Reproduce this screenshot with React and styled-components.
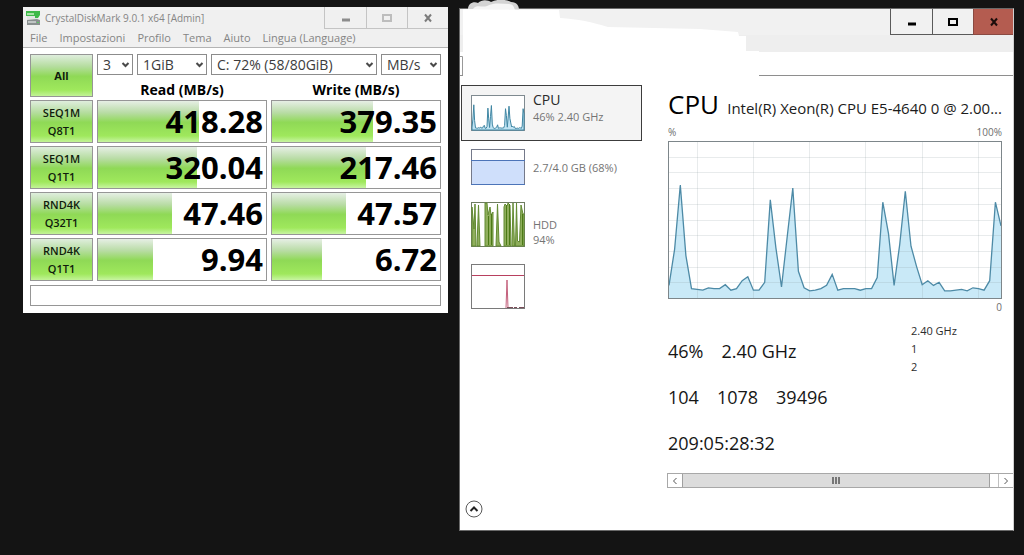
import React from 'react';
import styled, { createGlobalStyle } from 'styled-components';

const GlobalStyle = createGlobalStyle`
  *, *::before, *::after {
    box-sizing: border-box;
  }

  body {
    margin: 0;
    background-color: #141414;
    font-family: 'Open Sans', 'Noto Sans', sans-serif;
  }

  button, select {
    font-family: inherit;
    color: inherit;
  }
`;

const Desktop = styled.main`
  display: grid;
  grid-template-columns: minmax(0, 425fr) minmax(0, 555fr);
  align-items: start;
  gap: 11px;
  min-height: 100vh;
  padding: 7px 10px 24px 23px;
`;

/* --- shared window parts --- */

const WindowButtons = styled.div`
  display: flex;
  flex: none;
  margin-left: auto;
`;

const WindowButton = styled.button`
  display: flex;
  align-items: center;
  justify-content: center;
  width: ${(props) => props.$width}px;
  height: ${(props) => props.$height}px;
  padding: 0;
  border: 0 solid ${(props) => props.$line};
  border-width: 0 0 1px 1px;
  background-color: ${(props) => props.$bg || 'transparent'};
  color: ${(props) => props.$color};
`;

const Glyph = ({ name }) => (
    <svg width="12" height="12" viewBox="0 0 12 12" fill="none" stroke="currentColor" strokeWidth="2">
        {name === 'min' && <path d="M2 8h8" strokeWidth="3" />}
        {name === 'max' && <path d="M2 3h8v6H2z" />}
        {name === 'close' && <path d="M3 2.5l6 7M9 2.5l-6 7" />}
    </svg>
);

/* --- disk benchmark --- */

const BenchWindow = styled.section`
  background-color: #ffffff;
`;

const BenchTop = styled.header`
  background-color: #f0f0f0;
  border-bottom: 1px solid #b4b4b4;
  color: #858585;
`;

const BenchTitleBar = styled.div`
  display: flex;
  padding-left: 3px;
`;

const BenchTitle = styled.h1`
  display: flex;
  align-items: center;
  gap: 4px;
  margin: 0;
  font-size: 10px;
  font-weight: 400;
  white-space: nowrap;
`;

const MenuBar = styled.nav`
  display: flex;
  gap: 12px;
  padding: 0 7px;
`;

const MenuButton = styled.button`
  height: 18px;
  padding: 0;
  border: 0;
  background: none;
  font-size: 11px;
  line-height: 18px;
`;

const BenchBody = styled.div`
  padding: 3px 3px 7px;
`;

const BenchTable = styled.table`
  width: 100%;
  table-layout: fixed;
  border-collapse: separate;
  border-spacing: 4px 3px;

  th, td {
    padding: 0;
    vertical-align: top;
  }
`;

const ButtonColumn = styled.col`
  width: 63px;
`;

const TestButton = styled.button`
  display: block;
  width: 100%;
  height: 43px;
  padding: 0;
  border: 1px solid #969696;
  background: linear-gradient(#dfeedd 0%, #b5dd9f 28%, #8fd956 52%, #9fe85c 85%, #c2f397 100%);
  color: #101c0c;
  font-size: 11px;
  font-weight: 700;
  line-height: 18px;
`;

const TestLine = styled.span`
  display: block;
  font-weight: 600;
`;

const SelectRow = styled.div`
  display: flex;
  gap: 4px;
`;

const SelectBox = styled.div`
  display: grid;
  flex: ${(props) => props.$grow} 1 0;
  align-items: center;
  min-width: 0;

  > * {
    grid-area: 1 / 1;
  }

  svg {
    justify-self: end;
    margin-right: 3px;
    pointer-events: none;
  }
`;

const Select = styled.select`
  width: 100%;
  height: 21px;
  padding: 0 5px;
  border: 1px solid #8c8c8c;
  border-radius: 0;
  appearance: none;
  background-color: #ffffff;
  color: #3c3c3c;
  font-size: 14px;
  line-height: 19px;
`;

const ColumnHead = styled.th`
  && {
    padding-top: 4px;
  }
  font-size: 14px;
  font-weight: 700;
  line-height: 15px;
`;

const Meter = styled.div`
  display: grid;
  height: 43px;
  border: 1px solid #969696;

  > * {
    grid-area: 1 / 1;
  }
`;

const MeterFill = styled.div`
  background: linear-gradient(#e6efe5 0%, #b9dca6 28%, #8fd956 52%, #9fe85c 85%, #c8f5a2 100%);
`;

const MeterValue = styled.span`
  padding-right: 3px;
  color: #000000;
  font-size: 31px;
  font-weight: 700;
  line-height: 41px;
  text-align: right;
`;

const StatusField = styled.div`
  height: 21px;
  margin: 1px 4px 0;
  border: 1px solid #969696;
`;

const selects = [
    { label: 'Test count', value: '3', grow: 36 },
    { label: 'Test size', value: '1GiB', grow: 70 },
    { label: 'Drive', value: 'C: 72% (58/80GiB)', grow: 166 },
    { label: 'Unit', value: 'MB/s', grow: 60 },
];

const results = [
    { test: ['SEQ1M', 'Q8T1'], read: '418.28', readFill: 60, write: '379.35', writeFill: 60 },
    { test: ['SEQ1M', 'Q1T1'], read: '320.04', readFill: 59, write: '217.46', writeFill: 56 },
    { test: ['RND4K', 'Q32T1'], read: '47.46', readFill: 44, write: '47.57', writeFill: 44 },
    { test: ['RND4K', 'Q1T1'], read: '9.94', readFill: 33, write: '6.72', writeFill: 30 },
];

const DiskIcon = () => (
    <svg width="15" height="16" viewBox="0 0 15 16">
        <path d="M0 1h14v4l-2 3H9V6H0z" fill="#3fb94a" />
        <path d="M1 3h7v2H1z" fill="#a5e3a4" />
        <path d="M1 6h8v2h3l-2 3H1z" fill="#e2e5e4" />
        <path d="M1 10l10-1 3 1v5H1z" fill="#8a9090" />
        <path d="M2 11h8v2H2z" fill="#c0c5c5" />
        <path d="M11 12h2v1h-2z" fill="#58cb63" />
    </svg>
);

const ResultMeter = ({ value, fill }) => (
    <Meter>
        <MeterFill style={{ width: `${fill}%` }} />
        <MeterValue>{value}</MeterValue>
    </Meter>
);

const DiskBenchmark = () => (
    <BenchWindow>
        <BenchTop>
            <BenchTitleBar>
                <BenchTitle><DiskIcon />CrystalDiskMark 9.0.1 x64 [Admin]</BenchTitle>
                <WindowButtons>
                    <WindowButton $width={42} $height={22} $line="#c4c4c4" $color="#8c8c8c" aria-label="Minimize"><Glyph name="min" /></WindowButton>
                    <WindowButton $width={41} $height={22} $line="#c4c4c4" $color="#bdbdbd" aria-label="Maximize"><Glyph name="max" /></WindowButton>
                    <WindowButton $width={41} $height={22} $line="#c4c4c4" $color="#7c7c7c" aria-label="Close"><Glyph name="close" /></WindowButton>
                </WindowButtons>
            </BenchTitleBar>
            <MenuBar>
                {['File', 'Impostazioni', 'Profilo', 'Tema', 'Aiuto', 'Lingua (Language)'].map((item) => (
                    <MenuButton key={item}>{item}</MenuButton>
                ))}
            </MenuBar>
        </BenchTop>
        <BenchBody>
            <BenchTable>
                <colgroup>
                    <ButtonColumn />
                    <col />
                    <col />
                </colgroup>
                <thead>
                    <tr>
                        <th rowSpan={2}><TestButton>All</TestButton></th>
                        <td colSpan={2}>
                            <SelectRow>
                                {selects.map((item) => (
                                    <SelectBox key={item.label} $grow={item.grow}>
                                        <Select aria-label={item.label}>
                                            <option>{item.value}</option>
                                        </Select>
                                        <svg width="9" height="8" viewBox="0 0 9 8" fill="none" stroke="#4a4a4a" strokeWidth="2">
                                            <path d="M1.5 2l3 3 3-3" />
                                        </svg>
                                    </SelectBox>
                                ))}
                            </SelectRow>
                        </td>
                    </tr>
                    <tr>
                        <ColumnHead scope="col">Read (MB/s)</ColumnHead>
                        <ColumnHead scope="col">Write (MB/s)</ColumnHead>
                    </tr>
                </thead>
                <tbody>
                    {results.map((row) => (
                        <tr key={row.test.join('-')}>
                            <th scope="row">
                                <TestButton>
                                    {row.test.map((line) => <TestLine key={line}>{line}</TestLine>)}
                                </TestButton>
                            </th>
                            <td><ResultMeter value={row.read} fill={row.readFill} /></td>
                            <td><ResultMeter value={row.write} fill={row.writeFill} /></td>
                        </tr>
                    ))}
                </tbody>
            </BenchTable>
            <StatusField />
        </BenchBody>
    </BenchWindow>
);

/* --- task manager --- */

const TaskWindow = styled.section`
  display: flex;
  flex-direction: column;
  margin-top: 1px;
  border: 1px solid #6a6a6a;
  border-right-color: #d0d0d0;
  background-color: #ffffff;
`;

const TaskTop = styled.header`
  position: relative;
  height: 67px;
  border-bottom: 1px solid #8e8e8e;
  background: linear-gradient(#f1f1f1 26px, #eeeeee 26px, #eeeeee 43px, #ffffff 43px);
`;

const TaskTitleBar = styled.div`
  display: flex;
`;

// white brush strokes lying over the title and tabs
const Smudge = styled.svg`
  position: absolute;
  top: -9px;
  left: -1px;
`;

const TaskBody = styled.div`
  display: flex;
  gap: 25px;
`;

const Sidebar = styled.aside`
  display: flex;
  flex-direction: column;
  flex: none;
  width: 182px;
  padding: 9px 0 0 1px;
`;

const ResourceButton = styled.button`
  display: flex;
  align-items: ${(props) => props.$align || 'center'};
  gap: 8px;
  width: 100%;
  padding: 7px 9px 8px;
  border: 1px solid transparent;
  background-color: transparent;
  text-align: left;
`;

const ActiveResource = styled(ResourceButton)`
  padding: 4px 9px 9px;
  border-color: #3c3c3c;
  background-color: #f4f4f4;

  svg {
    margin-top: 5px;
  }
`;

const ResourceText = styled.span`
  display: flex;
  flex-direction: column;
  color: #747474;
  font-size: 11px;
  line-height: 15px;
`;

const ResourceName = styled.span`
  color: #2a2a2a;
  font-size: 14px;
  line-height: 19px;
`;

const CollapseButton = styled.button`
  display: flex;
  margin: auto 0 12px 4px;
  padding: 0;
  border: 0;
  background: none;
`;

const Details = styled.div`
  flex: 1;
  min-width: 0;
  padding: 12px 0 42px;
`;

const DetailsInner = styled.div`
  padding: 0 11px 0 1px;
`;

const DetailsHead = styled.div`
  display: flex;
  align-items: baseline;
  justify-content: space-between;
  height: 36px;
  white-space: nowrap;
`;

const DetailsTitle = styled.h2`
  margin: 0;
  color: #000000;
  font-size: 26px;
  font-weight: 400;
  line-height: 32px;
`;

const Model = styled.span`
  color: #1c1c1c;
  font-size: 15px;
`;

const AxisRow = styled.div`
  display: flex;
  justify-content: space-between;
  color: #6e6e6e;
  font-size: 10px;
  line-height: 17px;
`;

const Chart = styled.svg`
  display: block;
  width: 100%;
  height: 158px;
`;

const Stats = styled.div`
  display: grid;
  grid-template-columns: 1fr 91px;
  margin-top: 6px;
`;

const StatList = styled.div`
  padding-top: 6px;
`;

const StatRow = styled.div`
  display: flex;
  gap: 18px;
  height: 46px;
  color: #161616;
  font-size: 18px;
  line-height: 46px;
`;

const SideStats = styled.div`
  color: #2c2c2c;
  font-size: 11px;
  line-height: 18px;
`;

const ScrollBar = styled.div`
  display: flex;
  height: 15px;
  margin-top: 7px;
  border: 1px solid #a8a8a8;
  border-right: 0;
`;

const ScrollButton = styled.button`
  display: flex;
  align-items: center;
  justify-content: center;
  width: 14px;
  padding: 0;
  border: 0;
  background-color: #ffffff;
`;

const ScrollTrack = styled.div`
  display: flex;
  flex: 1;
  padding-right: 8px;
  border-right: 1px solid #c0c0c0;
`;

const ScrollThumb = styled.div`
  display: flex;
  align-items: center;
  justify-content: center;
  flex: 1;
  border: 0 solid #a0a0a0;
  border-width: 0 1px;
  background-color: #dcdcdc;
`;

const load = [
    8, 31, 72, 27, 6, 5.5, 5, 6.5, 6, 6, 8.5, 5, 6, 11, 13.5, 5, 5, 10, 62.5, 32,
    7, 39, 70, 17, 6.5, 4.5, 5, 6, 8, 15, 5, 6, 6, 6, 5, 6, 6, 13, 61, 41,
    8, 34, 68, 33, 20, 8.5, 11, 8, 10, 4.5, 4.5, 5, 5.5, 4.5, 6.5, 6, 5, 11, 61, 46,
];

const loadLine = (width, height) =>
    load
        .map((value, i) => {
            const x = 1 + (i * (width - 2)) / (load.length - 1);
            const y = height - 1 - (value / 100) * (height - 1);
            return `${x.toFixed(1)},${y.toFixed(1)}`;
        })
        .join(' ');

const CpuThumb = () => (
    <svg width="54" height="36" viewBox="0 0 54 36">
        <rect x="0.5" y="0.5" width="53" height="35" fill="#fff" stroke="#7f8a90" />
        <polygon points={`1,35 ${loadLine(54, 36)} 53,35`} fill="#bfe3f3" stroke="#3f86a3" />
    </svg>
);

const MemoryThumb = () => (
    <svg width="54" height="36" viewBox="0 0 54 36">
        <rect x="0.5" y="0.5" width="53" height="35" fill="#fff" stroke="#74798a" />
        <path d="M1 12h52v23H1z" fill="#cfdffb" />
        <path d="M0 11.5h54M0 35.5h54" stroke="#4c74b8" />
    </svg>
);

const DiskThumb = () => (
    <svg width="54" height="45" viewBox="0 0 54 45">
        <rect x="0.5" y="0.5" width="53" height="44" fill="#fff" stroke="#6f7d62" />
        <path
            d="M1 44V5l2 22 1-25 1 42zM6 44L7.500 3 9 44zM14 44V1h2l1 12 2-8 1 8 2-3v34zM25 44L26.500 2 28 40l2 4zM33 44V5l1-3 2 2 1-3 2 2 1 41zM41 44L42 1l1.500 43zM44.500 44L45.500 1l1 38 2 1 1.500-37 2 9 1 0v32z"
            fill="#8fae5c"
            stroke="#638b32"
        />
        <path d="M35.500 3v40M38.500 2v41M17.500 14v29M20.500 12v31M51.500 12v31" stroke="#4c7a17" />
    </svg>
);

const NetworkThumb = () => (
    <svg width="54" height="45" viewBox="0 0 54 45">
        <rect x="0.5" y="0.5" width="53" height="44" fill="#fff" stroke="#7a7a7a" />
        <path d="M1 11.5h52" stroke="#b8405f" />
        <path d="M35 44l1-28 1 28" fill="none" stroke="#c4607c" />
        <path d="M36 43.5h17" stroke="#7a4c58" strokeDasharray="6 1 3 2" />
    </svg>
);

const CpuChart = () => (
    <Chart viewBox="0 0 334 158" preserveAspectRatio="none">
        <rect width="334" height="158" fill="#fff" />
        <polygon points={`1,157 ${loadLine(334, 158)} 333,157`} fill="#c9e9f7" />
        {[1, 2, 3, 4, 5, 6, 7, 8, 9].map((n) => (
            <path key={n} d={`M1 ${Math.round(n * 15.7) + 0.5}h332`} stroke="#8a9aa0" strokeOpacity="0.2" />
        ))}
        {[29, 85, 141, 197, 254, 310].map((x) => (
            <path key={x} d={`M${x + 0.5} 1v156`} stroke="#8a9aa0" strokeOpacity="0.2" />
        ))}
        <polyline points={loadLine(334, 158)} fill="none" stroke="#4d8aa6" strokeWidth="1.3" />
        <rect x="0.5" y="0.5" width="333" height="157" fill="none" stroke="#7d868a" />
    </Chart>
);

const TaskManager = () => (
    <TaskWindow>
        <TaskTop>
            <TaskTitleBar>
                <WindowButtons>
                    <WindowButton $width={42} $height={26} $line="#5a5a5a" $color="#000" aria-label="Minimize"><Glyph name="min" /></WindowButton>
                    <WindowButton $width={41} $height={26} $line="#5a5a5a" $color="#000" aria-label="Maximize"><Glyph name="max" /></WindowButton>
                    <WindowButton $width={40} $height={26} $line="#8a4a42" $color="#1c0d0b" $bg="#b45c50" aria-label="Close"><Glyph name="close" /></WindowButton>
                </WindowButtons>
            </TaskTitleBar>
            <Smudge width="310" height="78" viewBox="0 0 310 78" aria-hidden="true">
                <path d="M9 9c0-5 5-8 10-6 4-4 10-3 13-1 6-3 14-3 20 0 6 0 8 4 8 8z" fill="#d4d4d4" />
                <path d="M14 9c4-5 9-1 14-3 8-4 15-2 22-2 4 0 5 3 6 6z" fill="#f6f6f6" />
                <path d="M1 36h4v16H1z" fill="#eee" />
                <path d="M4 9l96 1 1 8c18 1 32 4 48 9l92 2 38 3 1 4h7v15h13v27H4z" fill="#fff" />
                <path d="M3.500 75V56.500H1" fill="none" stroke="#999" />
            </Smudge>
        </TaskTop>
        <TaskBody>
            <Sidebar>
                <ActiveResource $align="flex-start">
                    <CpuThumb />
                    <ResourceText>
                        <ResourceName>CPU</ResourceName>
                        46% 2.40 GHz
                    </ResourceText>
                </ActiveResource>
                <ResourceButton>
                    <MemoryThumb />
                    <ResourceText>2.7/4.0 GB (68%)</ResourceText>
                </ResourceButton>
                <ResourceButton $align="flex-end">
                    <DiskThumb />
                    <ResourceText>
                        <span>HDD</span>
                        <span>94%</span>
                    </ResourceText>
                </ResourceButton>
                <ResourceButton aria-label="Network">
                    <NetworkThumb />
                </ResourceButton>
                <CollapseButton aria-label="Fewer details">
                    <svg width="18" height="18" viewBox="0 0 18 18" fill="none">
                        <circle cx="9" cy="9" r="8" stroke="#5a5a5a" />
                        <path d="M5.5 11L9 7.5l3.5 3.5" stroke="#222" strokeWidth="2" />
                    </svg>
                </CollapseButton>
            </Sidebar>
            <Details>
                <DetailsInner>
                    <DetailsHead>
                        <DetailsTitle>CPU</DetailsTitle>
                        <Model>Intel(R) Xeon(R) CPU E5-4640 0 @ 2.00...</Model>
                    </DetailsHead>
                    <AxisRow><span>%</span><span>100%</span></AxisRow>
                    <CpuChart />
                    <AxisRow><span /><span>0</span></AxisRow>
                    <Stats>
                        <StatList>
                            <StatRow><span>46%</span><span>2.40 GHz</span></StatRow>
                            <StatRow><span>104</span><span>1078</span><span>39496</span></StatRow>
                            <StatRow><span>209:05:28:32</span></StatRow>
                        </StatList>
                        <SideStats>
                            <div>2.40 GHz</div>
                            <div>1</div>
                            <div>2</div>
                        </SideStats>
                    </Stats>
                </DetailsInner>
                <ScrollBar>
                    <ScrollButton aria-label="Scroll left">
                        <svg width="8" height="8" viewBox="0 0 8 8" fill="none" stroke="#555"><path d="M5.5 1l-3 3 3 3" /></svg>
                    </ScrollButton>
                    <ScrollTrack>
                        <ScrollThumb>
                            <svg width="8" height="7" viewBox="0 0 8 7" stroke="#555"><path d="M1 0v7M4 0v7M7 0v7" strokeWidth="1.5" /></svg>
                        </ScrollThumb>
                    </ScrollTrack>
                    <ScrollButton aria-label="Scroll right">
                        <svg width="8" height="8" viewBox="0 0 8 8" fill="none" stroke="#555"><path d="M2.5 1l3 3-3 3" /></svg>
                    </ScrollButton>
                </ScrollBar>
            </Details>
        </TaskBody>
    </TaskWindow>
);

const App = () => (
    <>
        <GlobalStyle />
        <Desktop>
            <DiskBenchmark />
            <TaskManager />
        </Desktop>
    </>
);

export default App;
